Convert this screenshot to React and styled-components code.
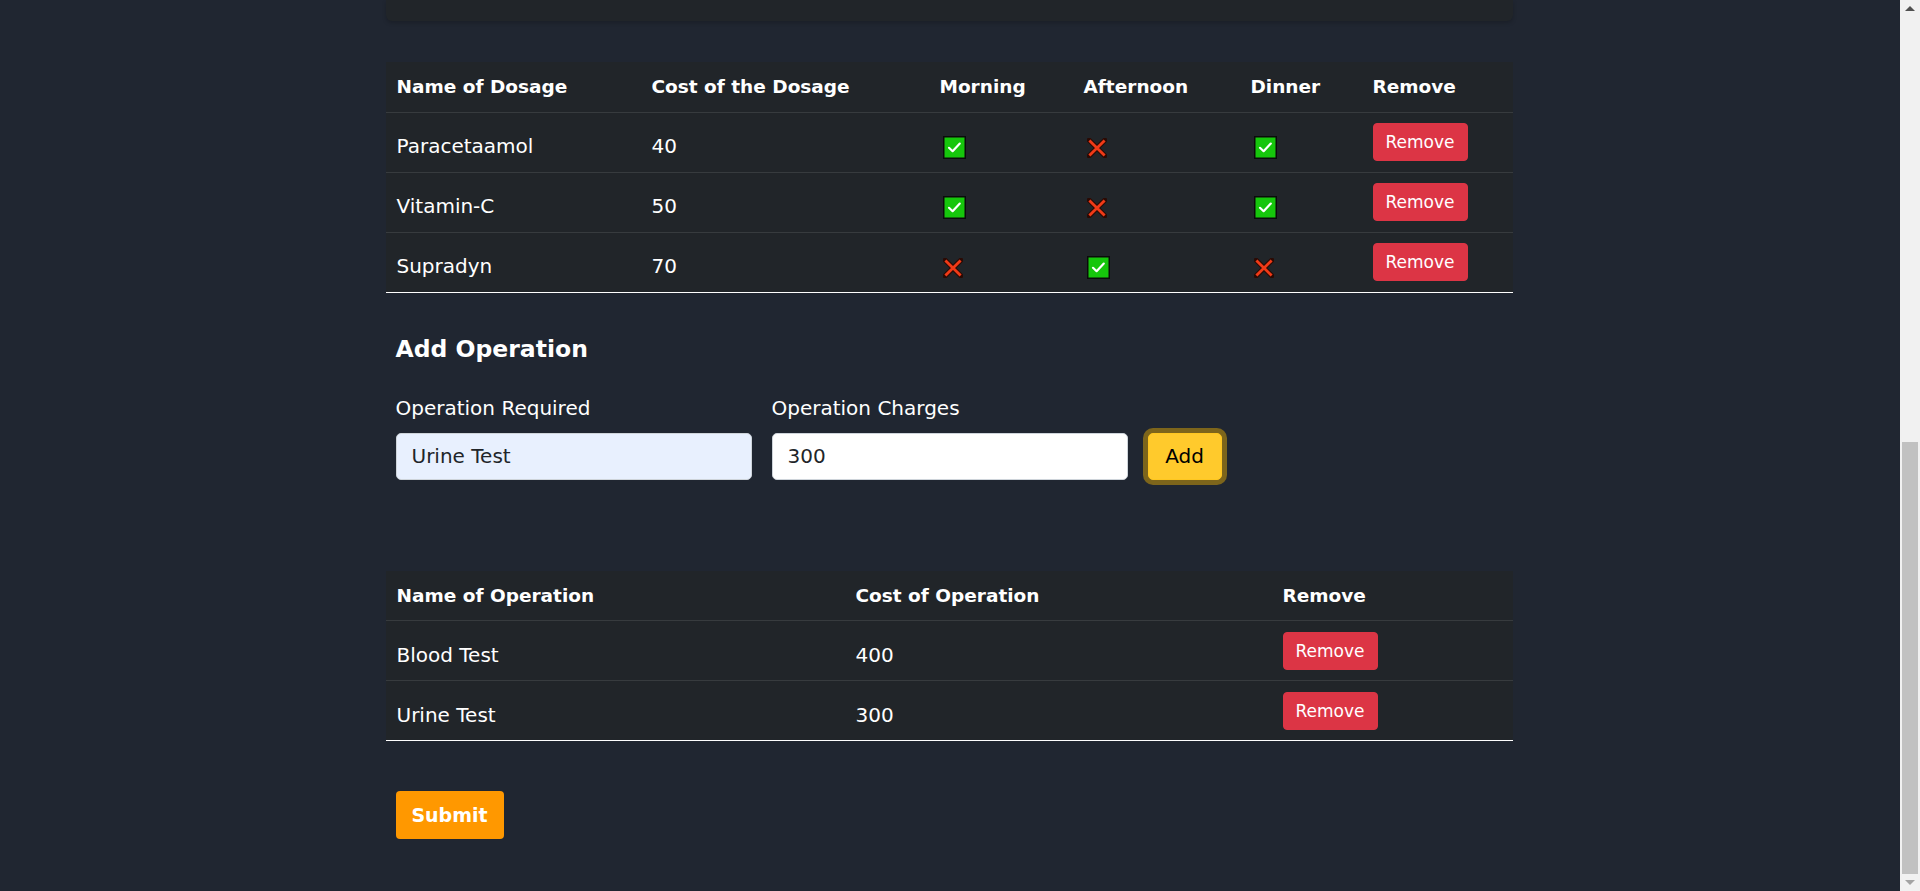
import React from "react";
import styled, { createGlobalStyle } from "styled-components";

const GlobalStyle = createGlobalStyle`
  html, body {
    margin: 0;
    padding: 0;
    background: #202631;
    overflow: hidden;
  }
  body {
    font-family: "DejaVu Sans", "Liberation Sans", sans-serif;
    color: #fff;
  }
  * {
    box-sizing: border-box;
  }
`;

const dosages = [
  { name: "Paracetaamol", cost: 40, morning: true, afternoon: false, dinner: true },
  { name: "Vitamin-C", cost: 50, morning: true, afternoon: false, dinner: true },
  { name: "Supradyn", cost: 70, morning: false, afternoon: true, dinner: false },
];

const operations = [
  { name: "Blood Test", cost: 400 },
  { name: "Urine Test", cost: 300 },
];

const CheckIcon = () => (
  <svg width="23" height="23" viewBox="0 0 23 23">
    <rect x="0.75" y="0.75" width="21.5" height="21.5" fill="#16c60c" stroke="#0b0b0b" strokeWidth="1.5" />
    <path d="M6 11.8 L9.6 15.2 L16.8 7.6" fill="none" stroke="#fff" strokeWidth="2.2" strokeLinecap="round" strokeLinejoin="round" />
  </svg>
);

const CrossIcon = () => (
  <svg width="20" height="20" viewBox="0 0 20 20">
    <path d="M2.2 2.2 L17.8 17.8 M17.8 2.2 L2.2 17.8" stroke="#2a0a04" strokeWidth="5" strokeLinecap="square" />
    <path d="M2.4 2.4 L17.6 17.6 M17.6 2.4 L2.4 17.6" stroke="#f03a17" strokeWidth="2.8" strokeLinecap="butt" />
  </svg>
);

const Mark = ({ on }) => <MarkBox $on={on}>{on ? <CheckIcon /> : <CrossIcon />}</MarkBox>;

const App = () => {
  return (
    <Page>
      <GlobalStyle />
      <Main>
        <Container>
          <CardTail />

          <Table $mt={41}>
            <colgroup>
              <Col $w={255} />
              <Col $w={288} />
              <Col $w={144} />
              <Col $w={167} />
              <Col $w={122} />
              <col />
            </colgroup>
            <thead>
              <tr>
                <Th>Name of Dosage</Th>
                <Th>Cost of the Dosage</Th>
                <Th>Morning</Th>
                <Th>Afternoon</Th>
                <Th>Dinner</Th>
                <Th>Remove</Th>
              </tr>
            </thead>
            <tbody>
              {dosages.map((d) => (
                <tr key={d.name}>
                  <Td>{d.name}</Td>
                  <Td>{d.cost}</Td>
                  <Td>
                    <Mark on={d.morning} />
                  </Td>
                  <Td>
                    <Mark on={d.afternoon} />
                  </Td>
                  <Td>
                    <Mark on={d.dinner} />
                  </Td>
                  <Td $action>
                    <RemoveBtn>Remove</RemoveBtn>
                  </Td>
                </tr>
              ))}
            </tbody>
          </Table>

          <FormSection>
            <Heading>Add Operation</Heading>
            <FormRow>
              <Field>
                <Label>Operation Required</Label>
                <Input $autofill defaultValue="Urine Test" />
              </Field>
              <Field>
                <Label>Operation Charges</Label>
                <Input defaultValue="300" />
              </Field>
              <AddBtn>Add</AddBtn>
            </FormRow>
          </FormSection>

          <Table $mt={91}>
            <colgroup>
              <Col $w={459} />
              <Col $w={427} />
              <col />
            </colgroup>
            <thead>
              <tr>
                <Th>Name of Operation</Th>
                <Th>Cost of Operation</Th>
                <Th>Remove</Th>
              </tr>
            </thead>
            <tbody>
              {operations.map((o) => (
                <tr key={o.name}>
                  <Td>{o.name}</Td>
                  <Td>{o.cost}</Td>
                  <Td $action>
                    <RemoveBtn>Remove</RemoveBtn>
                  </Td>
                </tr>
              ))}
            </tbody>
          </Table>

          <SubmitRow>
            <SubmitBtn>Submit</SubmitBtn>
          </SubmitRow>
        </Container>
      </Main>
      <Scrollbar>
        <ArrowBox>
          <Arrow $up />
        </ArrowBox>
        <Track>
          <Thumb />
        </Track>
        <ArrowBox>
          <Arrow />
        </ArrowBox>
      </Scrollbar>
    </Page>
  );
};

export default App;

const Page = styled.div`
  display: flex;
  width: 100vw;
  height: 100vh;
`;

const Main = styled.main`
  flex: 1;
  display: flex;
  justify-content: center;
  padding-right: 2px;
  overflow: hidden;
  background: #202631;
`;

const Container = styled.div`
  display: flex;
  flex-direction: column;
  width: 1127px;
  flex-shrink: 0;
`;

const CardTail = styled.div`
  height: 21px;
  background: #212529;
  border-radius: 0 0 6px 6px;
  box-shadow: 0 2px 4px rgba(0, 0, 0, 0.2);
`;

const Table = styled.table`
  width: 100%;
  margin-top: ${({ $mt }) => $mt}px;
  border-collapse: collapse;
  table-layout: fixed;
  background: #212529;
  color: #fff;

  tbody tr:last-child td {
    border-bottom: 1px solid #ffffff;
  }
`;

const Col = styled.col`
  width: ${({ $w }) => $w}px;
`;

const Th = styled.th`
  height: 50px;
  padding: 0 11px;
  text-align: left;
  vertical-align: middle;
  font-size: 18.5px;
  font-weight: 700;
  white-space: nowrap;
  border-bottom: 1px solid #373b3e;
`;

const Td = styled.td`
  height: 60px;
  padding: ${({ $action }) => ($action ? "0 11px" : "8px 11px 0")};
  vertical-align: middle;
  font-size: 20px;
  white-space: nowrap;
  border-bottom: 1px solid #373b3e;
`;

const MarkBox = styled.span`
  display: inline-flex;
  margin-left: ${({ $on }) => ($on ? "3px" : "3px")};
  vertical-align: middle;
`;

const RemoveBtn = styled.button`
  display: inline-flex;
  align-items: center;
  justify-content: center;
  width: 95px;
  height: 38px;
  padding: 0;
  border: 1px solid #dc3545;
  border-radius: 4px;
  background: #dc3545;
  color: #fff;
  font-family: inherit;
  font-size: 17px;
  cursor: pointer;
  vertical-align: middle;
`;

const FormSection = styled.section`
  display: flex;
  flex-direction: column;
  padding: 42px 10px 0;
`;

const Heading = styled.h3`
  margin: 0;
  font-size: 23.5px;
  font-weight: 700;
  line-height: 28px;
`;

const FormRow = styled.div`
  display: flex;
  align-items: flex-end;
  gap: 20px;
  margin-top: 33px;
`;

const Field = styled.div`
  display: flex;
  flex-direction: column;
  gap: 13px;
`;

const Label = styled.label`
  font-size: 20px;
  line-height: 24px;
  white-space: nowrap;
`;

const Input = styled.input`
  width: 356px;
  height: 47px;
  padding: 0 15px;
  border: 1px solid #ced4da;
  border-radius: 5px;
  background: ${({ $autofill }) => ($autofill ? "#e8f0fe" : "#ffffff")};
  color: #212529;
  font-family: inherit;
  font-size: 20px;
  outline: none;
`;

const AddBtn = styled.button`
  width: 74px;
  height: 47px;
  padding: 0;
  border: 1px solid #ffc720;
  border-radius: 5px;
  background: #ffca2c;
  color: #000;
  font-family: inherit;
  font-size: 20px;
  box-shadow: 0 0 0 5px rgba(217, 164, 6, 0.5);
  cursor: pointer;
`;

const SubmitRow = styled.div`
  display: flex;
  padding: 50px 10px 0;
`;

const SubmitBtn = styled.button`
  width: 108px;
  height: 48px;
  padding: 0;
  border: none;
  border-radius: 4px;
  background: #ff9800;
  color: #fff;
  font-family: inherit;
  font-size: 19px;
  font-weight: 700;
  cursor: pointer;
`;

const Scrollbar = styled.div`
  display: flex;
  flex-direction: column;
  width: 20px;
  flex-shrink: 0;
  background: #f1f1f1;
`;

const ArrowBox = styled.div`
  display: flex;
  align-items: center;
  justify-content: center;
  height: 17px;
`;

const Arrow = styled.span`
  width: 0;
  height: 0;
  border-left: 5px solid transparent;
  border-right: 5px solid transparent;
  ${({ $up }) =>
    $up
      ? `border-bottom: 5px solid #505050;`
      : `border-top: 5px solid #a3a3a3;`}
`;

const Track = styled.div`
  flex: 1;
  display: flex;
  flex-direction: column;
  justify-content: flex-end;
  padding: 0 2px;
`;

const Thumb = styled.div`
  height: 432px;
  background: #c1c1c1;
`;
